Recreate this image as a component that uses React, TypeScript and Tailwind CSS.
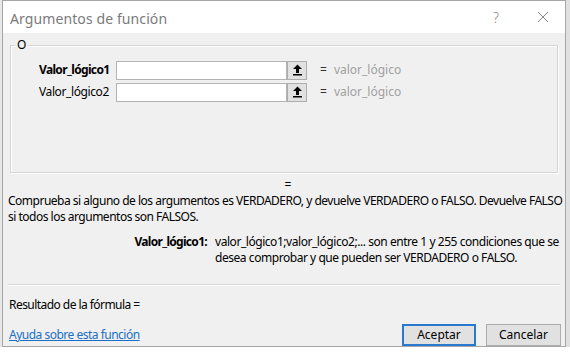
import React from "react";

const font = { fontFamily: '"Noto Sans", "Open Sans", sans-serif' };

function UpBtn() {
  return (
    <div className="w-[20px] h-[19px] bg-[#e1e1e1] border border-[#adadad] flex items-center justify-center">
      <svg width="11" height="12" viewBox="0 0 11 12">
        <path d="M5.5 0.5 L10 5 L7 5 L7 9 L4 9 L4 5 L1 5 Z" fill="#000" />
        <rect x="1" y="10" width="9" height="1.5" fill="#000" />
      </svg>
    </div>
  );
}

function ArgRow({ label, bold }: { label: string; bold?: boolean }) {
  return (
    <div className="flex items-center h-[22px]">
      <div className={`w-[77px] pl-[28px] box-content text-[12px] text-[#000] whitespace-nowrap ${bold ? "font-bold tracking-[-0.65px]" : "tracking-[-0.4px]"}`}>{label}</div>
      <div className="w-[171px] h-[19px] bg-white border border-[#b4b4b4]" />
      <UpBtn />
      <div className="ml-[13px] text-[12px] text-[#333]">=</div>
      <div className="ml-[7px] text-[12px] text-[#a0a0a0]">valor_lógico</div>
    </div>
  );
}

export default function App() {
  return (
    <div className="w-[570px] h-[353px] bg-white relative overflow-hidden" style={font}>
      <div className="flex h-[347px]">
        <div className="w-[2px] bg-[#e8e8e8]" />
        <div className="w-[564px] h-[347px] border border-[#a6a6a6] flex flex-col bg-[#f0f0f0]">
          <div className="h-[32px] bg-white flex items-center pl-[7px] pr-[14px] shrink-0">
            <div className="text-[14px] text-[#7a7a7a] tracking-[0.1px] mt-[2px]">Argumentos de función</div>
            <div className="ml-auto text-[14px] text-[#888] mr-[38px] font-light">?</div>
            <svg width="12" height="12" viewBox="0 0 12 12" className="mr-[2px]">
              <path d="M1 1 L11 11 M11 1 L1 11" stroke="#8a8a8a" strokeWidth="1" />
            </svg>
          </div>
          <div className="relative mx-[7px] mt-[12px] h-[131px] border border-[#d5d5d5] shadow-[inset_1px_1px_0_#fff,1px_1px_0_#fff]">
            <div className="absolute -top-[10px] left-[4px] px-[2px] bg-[#f0f0f0] text-[12px] text-[#000] leading-[18px]">O</div>
            <div className="pt-[13px] flex flex-col">
              <ArgRow label="Valor_lógico1" bold />
              <ArgRow label="Valor_lógico2" />
            </div>
          </div>
          <div className="text-center text-[12px] leading-[16px] mt-[4px] pl-[8px] text-[#000]">=</div>
          <div className="pl-[5px] text-[12px] leading-[16px] text-[#000] tracking-[-0.5px] whitespace-nowrap">
            Comprueba si alguno de los argumentos es VERDADERO, y devuelve VERDADERO o FALSO. Devuelve FALSO
            <br />
            si todos los argumentos son FALSOS.
          </div>
          <div className="flex mt-[9px] text-[12px] leading-[16px] text-[#000]">
            <div className="w-[212px] text-right font-bold pr-[8px] whitespace-nowrap tracking-[-0.7px]">Valor_lógico1:</div>
            <div className="whitespace-nowrap tracking-[-0.45px]">
              valor_lógico1;valor_lógico2;... son entre 1 y 255 condiciones que se
              <br />
              desea comprobar y que pueden ser VERDADERO o FALSO.
            </div>
          </div>
          <div className="mx-[5px] mt-[18px] h-[1px] bg-[#dadada] shadow-[0_1px_0_#fff]" />
          <div className="pl-[6px] mt-[12px] text-[12px] leading-[16px] text-[#000] tracking-[-0.55px]">Resultado de la fórmula =</div>
          <div className="flex items-center mt-[11px] pl-[6px] pr-[4px]">
            <div className="text-[12px] text-[#1a6fc4] underline tracking-[-0.5px]">Ayuda sobre esta función</div>
            <div className="ml-auto w-[74px] h-[22px] border-2 border-[#2a79cf] bg-[#e1e1e1] flex items-center justify-center text-[12px] text-[#000]">Aceptar</div>
            <div className="ml-[10px] w-[75px] h-[22px] border border-[#adadad] bg-[#e1e1e1] flex items-center justify-center text-[12px] text-[#000]">Cancelar</div>
          </div>
        </div>
        <div className="w-[4px] bg-[#e0e0e0]" />
      </div>
    </div>
  );
}
